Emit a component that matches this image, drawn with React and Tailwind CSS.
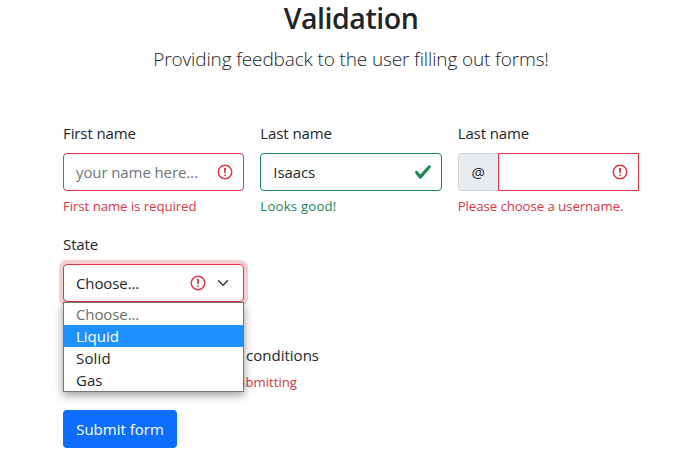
function InvalidIcon({ className = "" }) {
  return (
    <svg className={`size-[18px] shrink-0 ${className}`} viewBox="0 0 12 12" fill="none" stroke="#dc3545">
      <circle cx="6" cy="6" r="4.5" />
      <path strokeLinejoin="round" d="M5.8 3.6h.4L6 6.5z" />
      <circle cx="6" cy="8.2" r=".6" fill="#dc3545" stroke="none" />
    </svg>
  );
}

function ValidIcon() {
  return (
    <svg className="size-[18px] shrink-0" viewBox="0 0 8 8">
      <path
        fill="#198754"
        d="M2.3 6.73.6 4.53c-.4-1.04.46-1.4 1.1-.8l1.1 1.4 3.4-3.8c.6-.63 1.6-.27 1.2.7l-4 4.6c-.43.5-.8.4-1.1.1z"
      />
    </svg>
  );
}

function Field({ label, feedback, feedbackClass, children }) {
  return (
    <div className="min-w-0">
      <div className="mb-2 h-6 leading-6 tracking-[-0.1px]">{label}</div>
      {children}
      {feedback && <div className={`mt-[5px] h-5 text-[13.2px] leading-5 ${feedbackClass}`}>{feedback}</div>}
    </div>
  );
}

export default function App() {
  return (
    <main className="h-[471px] w-[689px] overflow-hidden bg-white pl-[63px] font-['Open_Sans','Noto_Sans',sans-serif] text-[15px] whitespace-nowrap text-[#212529]">
      <header className="flex w-[576px] flex-col items-center">
        <h1 className="h-9 text-[28.5px] leading-9 font-semibold tracking-[-0.45px]">Validation</h1>
        <p className="mt-2 h-[30px] text-[19px] leading-[30px] font-light tracking-[-0.13px]">
          Providing feedback to the user filling out forms!
        </p>
      </header>

      <form className="mt-[47px] w-[576px]">
        <div className="grid grid-cols-3 gap-4">
          <Field label="First name" feedback="First name is required" feedbackClass="text-[#dc3545] tracking-[-0.05px]">
            <div className="flex h-[38px] items-center justify-between rounded border border-[#dc3545] pr-[9px] pl-3">
              <span className="tracking-[-0.1px] text-[#6c757d]">your name here...</span>
              <InvalidIcon />
            </div>
          </Field>
          <Field label="Last name" feedback="Looks good!" feedbackClass="text-[#198754] tracking-[0.2px]">
            <div className="flex h-[38px] items-center justify-between rounded border border-[#198754] pr-[9px] pl-3">
              <span className="tracking-[-0.1px]">Isaacs</span>
              <ValidIcon />
            </div>
          </Field>
          <Field label="Last name" feedback="Please choose a username." feedbackClass="text-[#dc3545] tracking-[-0.05px]">
            <div className="flex h-[38px]">
              <span className="flex w-10 items-center justify-center rounded-l border border-r-0 border-[#ced4da] bg-[#e9ecef]">
                @
              </span>
              <div className="flex flex-1 items-center justify-end border border-[#dc3545] pr-[9px]">
                <InvalidIcon />
              </div>
            </div>
          </Field>
        </div>

        <div className="mt-4 w-[181px]">
          <Field label="State">
            <div className="relative">
              <div className="flex h-[38px] items-center rounded border border-[#dc3545] pr-3 pl-3 shadow-[0_0_0_4px_rgba(220,53,69,0.25)]">
                <span className="flex-1 tracking-[-0.1px]">Choose...</span>
                <InvalidIcon className="mr-2" />
                <svg className="h-3 w-4" viewBox="0 0 16 16" fill="none" stroke="#343a40" strokeWidth="2" strokeLinecap="round" strokeLinejoin="round">
                  <path d="m2 5 6 6 6-6" />
                </svg>
              </div>
              <ul className="absolute top-[38px] left-0 z-10 w-[181px] border border-[#767676] bg-white leading-[22px] shadow-[0_3px_9px_rgba(0,0,0,0.4)]">
                <li className="h-[22px] pl-3 tracking-[-0.1px] text-[#6d6d6d]">Choose...</li>
                <li className="h-[22px] bg-[#1e90ff] pl-3 text-white">Liquid</li>
                <li className="h-[22px] pl-3 tracking-[0.15px]">Solid</li>
                <li className="h-[22px] pl-3">Gas</li>
              </ul>
            </div>
          </Field>
        </div>

        <div className="mt-[41px] flex h-6 w-[256px] justify-end leading-6">
          <span>Agree to terms and conditions</span>
        </div>
        <div className="mt-[5px] flex h-5 w-[234px] justify-end text-[13.2px] leading-5 text-[#dc3545]">
          <span>You must agree before submitting</span>
        </div>

        <button type="button" className="mt-[18px] block h-[38px] w-[114px] rounded bg-[#0d6efd] text-center text-white">
          Submit form
        </button>
      </form>
    </main>
  );
}
